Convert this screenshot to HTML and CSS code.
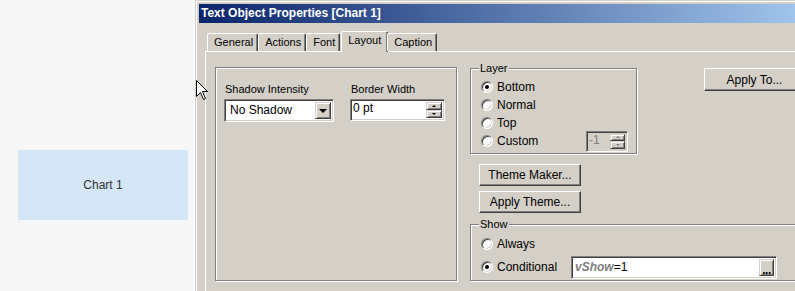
FILE: index.html
```html
<!DOCTYPE html>
<html lang="en">
<head>
    <meta charset="UTF-8">
    <title>Text Object Properties</title>
    <link rel="stylesheet" href="styles.css">
</head>
<body>
    <div class="desk">
        <div class="canvas">
            <div class="chart">Chart 1</div>
        </div>

        <div class="dialog">
            <div class="titlebar">Text Object Properties [Chart 1]</div>

            <div class="tabs">
                <span class="tab">General</span>
                <span class="tab">Actions</span>
                <span class="tab">Font</span>
                <span class="tab tab-active">Layout</span>
                <span class="tab">Caption</span>
            </div>

            <div class="panel">
                <!-- left box: shadow and border -->
                <div class="group group-left">
                    <div class="field field-shadow">
                        <div class="field-label">Shadow Intensity</div>
                        <div class="combo">
                            <span class="combo-text">No Shadow</span>
                            <span class="combo-btn"><span class="arrow-down"></span></span>
                        </div>
                    </div>
                    <div class="field field-border">
                        <div class="field-label">Border Width</div>
                        <div class="spin">
                            <span class="spin-text">0 pt</span>
                            <span class="spin-btns">
                                <span class="spin-btn"><span class="arrow-up-sm"></span></span>
                                <span class="spin-btn"><span class="arrow-down-sm"></span></span>
                            </span>
                        </div>
                    </div>
                </div>

                <div class="right">
                    <div class="layer-row">
                        <div class="group group-layer">
                            <span class="group-label">Layer</span>
                            <div class="radio-row"><span class="radio radio-on"></span>Bottom</div>
                            <div class="radio-row"><span class="radio"></span>Normal</div>
                            <div class="radio-row"><span class="radio"></span>Top</div>
                            <div class="radio-row">
                                <span class="radio"></span>Custom
                                <div class="spin spin-disabled">
                                    <span class="spin-text">-1</span>
                                    <span class="spin-btns">
                                        <span class="spin-btn"><span class="arrow-up-sm"></span></span>
                                        <span class="spin-btn"><span class="arrow-down-sm"></span></span>
                                    </span>
                                </div>
                            </div>
                        </div>
                        <div class="btn btn-apply-to">Apply To...</div>
                    </div>

                    <div class="theme-buttons">
                        <div class="btn btn-theme">Theme Maker...</div>
                        <div class="btn btn-theme">Apply Theme...</div>
                    </div>

                    <div class="group group-show">
                        <span class="group-label">Show</span>
                        <div class="radio-row"><span class="radio"></span>Always</div>
                        <div class="radio-row radio-row-cond">
                            <span class="radio-cond"><span class="radio radio-on"></span>Conditional</span>
                            <div class="expr">
                                <span class="expr-text"><span class="expr-var">vShow</span>=1</span>
                                <span class="expr-btn">...</span>
                            </div>
                        </div>
                    </div>
                </div>
            </div>
        </div>

        <svg class="cursor" width="13" height="21" viewBox="0 0 13 21">
            <path d="M0.5 0.5 L0.5 16.5 L4.5 12.5 L7.5 19.5 L9.5 18.5 L6.5 11.5 L11.5 11.5 Z" fill="#ffffff" stroke="#000000" stroke-width="1"/>
        </svg>
    </div>
</body>
</html>
```

FILE: styles.css
```css
html, body {
    margin: 0;
    padding: 0;
    overflow: hidden;
}

body {
    width: 795px;
    height: 291px;
    font-family: "Liberation Sans", Arial, sans-serif;
    font-size: 11px;
    color: #000000;
    background-color: #f7f7f7;
}

.desk {
    position: relative;
    display: flex;
    height: 291px;
    overflow: hidden;
}

/* sheet area on the left */
.canvas {
    width: 195px;
    flex: none;
    box-sizing: border-box;
    padding: 150px 0 0 18px;
    background-color: #f7f7f7;
}

.chart {
    display: flex;
    justify-content: center;
    align-items: center;
    width: 170px;
    height: 70px;
    background-color: #d5e6f6;
    color: #333333;
    font-size: 12px;
}

/* dialog window */
.dialog {
    flex: 1;
    min-width: 0;
    overflow: hidden;
    padding: 3px 0 0 3px;
    background-color: #d4d0c8;
    border-left: 1px solid #d4d0c8;
    border-top: 1px solid #d4d0c8;
    box-shadow: inset 1px 1px 0 #ffffff;
}

.titlebar {
    height: 19px;
    line-height: 19px;
    padding-left: 2px;
    color: #ffffff;
    font-weight: bold;
    font-size: 12px;
    background: linear-gradient(90deg, #0a246a 0, #a6caf0 620px);
    white-space: nowrap;
}

.tabs {
    display: flex;
    align-items: flex-end;
    height: 20px;
    margin: 8px 0 0 8px;
    position: relative;
    z-index: 1;
}

.tab {
    height: 18px;
    line-height: 17px;
    padding: 0 4px 0 6px;
    border-left: 1px solid #ffffff;
    border-top: 1px solid #ffffff;
    border-right: 1px solid #404040;
    border-top-left-radius: 2px;
    border-top-right-radius: 2px;
    box-shadow: inset -1px 0 0 #808080;
    box-sizing: border-box;
    white-space: nowrap;
}

.tab-active {
    height: 21px;
    line-height: 17px;
    margin: 0 -1px -1px 1px;
    padding: 0 6px 0 6px;
    background-color: #d4d0c8;
}

.panel {
    display: flex;
    gap: 13px;
    margin-left: 6px;
    padding: 15px 0 0 9px;
    border-top: 1px solid #ffffff;
    border-left: 1px solid #ffffff;
    height: 240px;
}

/* etched group boxes */
.group {
    position: relative;
    box-sizing: border-box;
    border: 1px solid #808080;
    box-shadow: 1px 1px 0 #ffffff, inset 1px 1px 0 #ffffff;
}

.group-label {
    position: absolute;
    top: -8px;
    left: 8px;
    padding: 0 1px;
    line-height: 14px;
    background-color: #d4d0c8;
}

.group-left {
    display: flex;
    gap: 16px;
    width: 242px;
    height: 214px;
    padding: 15px 0 0 8px;
    flex: none;
}

.field-label {
    line-height: 13px;
    margin: 0 0 3px 1px;
}

/* sunken fields */
.combo,
.spin,
.expr {
    display: flex;
    box-sizing: border-box;
    background-color: #ffffff;
    border: 1px solid;
    border-color: #808080 #ffffff #ffffff #808080;
    box-shadow: inset 1px 1px 0 #404040, inset -1px -1px 0 #d4d0c8;
    padding: 2px;
}

.combo {
    width: 110px;
    height: 23px;
}

.combo-text {
    flex: 1;
    padding-left: 3px;
    line-height: 17px;
    font-size: 12px;
}

.combo-btn,
.spin-btn,
.expr-btn {
    display: flex;
    justify-content: center;
    align-items: center;
    box-sizing: border-box;
    background-color: #d4d0c8;
    border: 1px solid;
    border-color: #d4d0c8 #404040 #404040 #d4d0c8;
    box-shadow: inset 1px 1px 0 #ffffff, inset -1px -1px 0 #808080;
}

.combo-btn {
    width: 16px;
    height: 17px;
}

.arrow-down {
    width: 0;
    height: 0;
    border-left: 4px solid transparent;
    border-right: 4px solid transparent;
    border-top: 4px solid #000000;
    margin-top: 1px;
}

.spin {
    width: 95px;
    height: 22px;
}

.spin-text {
    flex: 1;
    line-height: 13px;
    padding-left: 0;
    font-size: 12px;
}

.spin-btns {
    display: flex;
    flex-direction: column;
    width: 16px;
}

.spin-btn {
    flex: 1;
}

.arrow-up-sm,
.arrow-down-sm {
    width: 0;
    height: 0;
    border-left: 2px solid transparent;
    border-right: 2px solid transparent;
}

.arrow-up-sm {
    border-bottom: 2px solid #000000;
}

.arrow-down-sm {
    border-top: 2px solid #000000;
}

/* right column */
.right {
    display: flex;
    flex-direction: column;
    padding-top: 1px;
}

.layer-row {
    display: flex;
    align-items: flex-start;
}

.group-layer {
    width: 167px;
    height: 86px;
    padding: 9px 8px 0 10px;
}

.radio-row {
    display: flex;
    align-items: center;
    gap: 4px;
    height: 18px;
    font-size: 12px;
}

.radio {
    width: 12px;
    height: 12px;
    box-sizing: border-box;
    border-radius: 50%;
    border: 1px solid;
    border-color: #808080 #ffffff #ffffff #808080;
    box-shadow: inset 1px 1px 0 #404040, inset -1px -1px 0 #d4d0c8;
    background-color: #ffffff;
    position: relative;
}

.radio-on::after {
    content: "";
    position: absolute;
    left: 3px;
    top: 3px;
    width: 4px;
    height: 4px;
    border-radius: 50%;
    background-color: #000000;
}

.spin-disabled {
    width: 42px;
    height: 21px;
    margin-left: auto;
    background-color: #d4d0c8;
    color: #808080;
}

.spin-disabled .spin-btns {
    width: 15px;
}

.spin-disabled .arrow-up-sm {
    border-bottom-color: #808080;
}

.spin-disabled .arrow-down-sm {
    border-top-color: #808080;
}

.btn {
    box-sizing: border-box;
    display: flex;
    justify-content: center;
    align-items: center;
    background-color: #d4d0c8;
    border: 1px solid;
    border-color: #ffffff #404040 #404040 #ffffff;
    box-shadow: inset -1px -1px 0 #808080;
    font-size: 12px;
}

.btn-apply-to {
    width: 101px;
    height: 23px;
    margin-left: 67px;
}

.theme-buttons {
    display: flex;
    flex-direction: column;
    gap: 5px;
    margin: 10px 0 0 9px;
}

.btn-theme {
    width: 102px;
    height: 22px;
}

.group-show {
    width: 400px;
    height: 57px;
    margin-top: 11px;
    padding: 10px 0 0 10px;
}

.radio-row-cond {
    height: 22px;
    margin-top: 3px;
}

.radio-cond {
    display: flex;
    align-items: center;
    gap: 4px;
    width: 86px;
}

.expr {
    width: 206px;
    height: 23px;
}

.expr-text {
    flex: 1;
    padding-left: 1px;
    line-height: 17px;
    font-size: 12px;
}

.expr-var {
    color: #808080;
    font-weight: bold;
    font-style: italic;
}

.expr-btn {
    width: 15px;
    height: 17px;
    align-items: flex-end;
    font-weight: bold;
    line-height: 10px;
    letter-spacing: -0.5px;
}

/* mouse pointer over the dialog edge */
.cursor {
    position: absolute;
    left: 196px;
    top: 80px;
}
```
